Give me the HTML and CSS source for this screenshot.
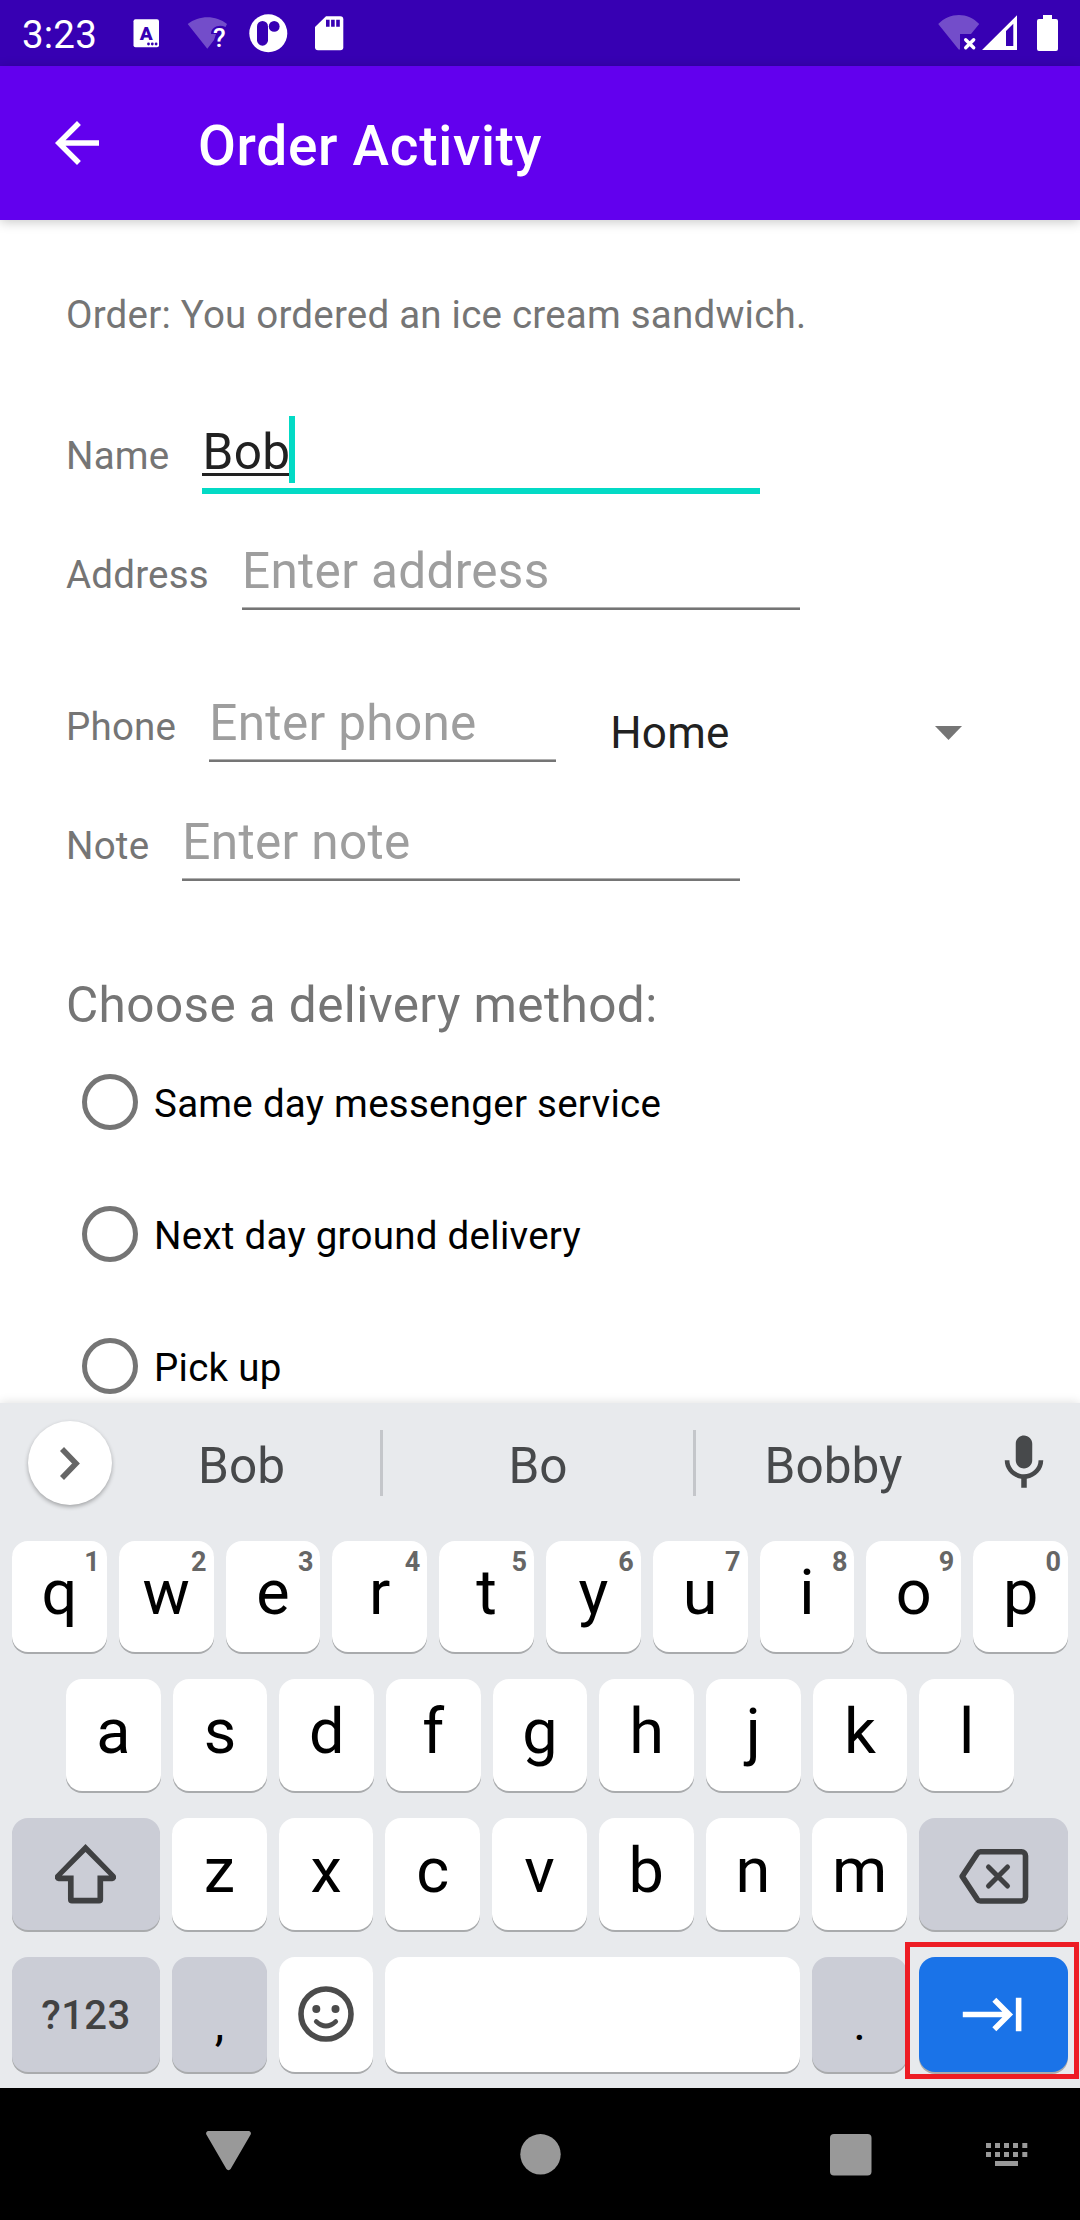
FILE: index.html
```html
<!DOCTYPE html>
<html lang="en">
<head>
<meta charset="utf-8">
<title>Order Activity</title>
<link rel="stylesheet" href="styles.css">
</head>
<body>
<div class="phone">
  <header class="status-bar">
    <span class="clock">3:23</span>
    <svg class="status-icons-left" width="212" height="40" viewBox="132 13 212 40">
      <rect x="133.5" y="19.3" width="25.5" height="28" rx="2" fill="#fff"/>
      <text class="glyph-a" x="146.3" y="40.3" text-anchor="middle">A</text>
      <g fill="#3700b3"><circle cx="148.5" cy="44" r="1.4"/><circle cx="152.3" cy="44" r="1.4"/><circle cx="156.1" cy="44" r="1.4"/></g>
      <path d="M187.7 24C199 15 216 15 227 24L225.500 27C219 24 211 27 211 34H216L214 40L207.300 48.700z" fill="#734dca"/>
      <text class="glyph-q" x="219.300" y="47.300" text-anchor="middle">?</text>
      <circle cx="268.300" cy="33.200" r="19" fill="#fff"/>
      <rect x="257" y="21" width="11" height="24.700" rx="5.500" fill="#3700b3"/>
      <circle cx="274.200" cy="26.400" r="5.400" fill="#3700b3"/>
      <path d="M326 16.300H340.300a3 3 0 0 1 3 3V47.300a3 3 0 0 1-3 3H318a3 3 0 0 1-3-3V27z" fill="#fff"/>
      <path d="M326 19.700h3.600v7H326zM331.100 19.700h3.600v7h-3.600zM336.200 19.700h3.600v7h-3.600z" fill="#3700b3"/>
    </svg>
    <svg class="status-icons-right" width="122" height="38" viewBox="937 14 122 38">
      <path d="M938.200 24C950 12 968 12 979.200 24L971 34H960V49.500H958.700z" fill="#734dca"/>
      <path d="M965.700 39.700l8 8m0-8l-8 8" stroke="#fff" stroke-width="3.400" stroke-linecap="round"/>
      <path fill-rule="evenodd" d="M982 50L1017 15.300V50zM1006 46H1013.300V23.800L1006 31z" fill="#fff"/>
      <path d="M1043 15h9v4h4a2 2 0 0 1 2 2V49a2 2 0 0 1-2 2h-17a2 2 0 0 1-2-2V21a2 2 0 0 1 2-2h4z" fill="#fff"/>
    </svg>
  </header>

  <div class="app-bar">
    <svg width="66" height="66" viewBox="0 0 24 24"><path fill="#fff" d="M20 11H7.830l5.590-5.590L12 4l-8 8 8 8 1.410-1.410L7.830 13H20z"/></svg>
    <h1 class="title">Order Activity</h1>
  </div>

  <main class="form">
    <p class="order">Order: You ordered an ice cream sandwich.</p>
    <div class="row">
      <label class="label">Name</label>
      <div class="field field-active"><span class="composing">Bob</span><span class="cursor"></span></div>
    </div>
    <div class="row row-address">
      <label class="label">Address</label>
      <div class="field">Enter address</div>
    </div>
    <div class="row">
      <label class="label">Phone</label>
      <div class="field field-short">Enter phone</div>
      <div class="spinner"><span>Home</span>
        <svg width="27" height="14" viewBox="0 0 27 14"><path fill="#757575" d="M0 0h27L13.500 14z"/></svg></div>
    </div>
    <div class="row row-note">
      <label class="label">Note</label>
      <div class="field">Enter note</div>
    </div>
    <h2 class="choose">Choose a delivery method:</h2>
    <div class="radio"><span class="ring"></span><span class="radio-text">Same day messenger service</span></div>
    <div class="radio"><span class="ring"></span><span class="radio-text">Next day ground delivery</span></div>
    <div class="radio"><span class="ring"></span><span class="radio-text">Pick up</span></div>
  </main>

  <section class="keyboard">
    <div class="suggestions">
      <div class="expand"><svg width="20" height="33" viewBox="0 0 20 33"><path d="M2 2L16 16.500L2 31" fill="none" stroke="#666" stroke-width="5.600"/></svg></div>
      <span class="word">Bob</span><i class="divider"></i>
      <span class="word word-mid">Bo</span><i class="divider"></i>
      <span class="word word-last">Bobby</span>
      <div class="mic"><svg width="66" height="66" viewBox="0 0 24 24"><path fill="#47494b" d="M12 14c1.660 0 2.990-1.340 2.990-3L15 5c0-1.660-1.340-3-3-3S9 3.340 9 5v6c0 1.660 1.340 3 3 3zm5.300-3c0 3-2.540 5.100-5.300 5.100S6.700 14 6.700 11H5c0 3.410 2.720 6.230 6 6.720V21h2v-3.280c3.280-.480 6-3.300 6-6.720z"/></svg></div>
    </div>
    <div class="keys keys-top">
      <span class="key">q<sup>1</sup></span><span class="key">w<sup>2</sup></span><span class="key">e<sup>3</sup></span><span class="key">r<sup>4</sup></span><span class="key">t<sup>5</sup></span><span class="key">y<sup>6</sup></span><span class="key">u<sup>7</sup></span><span class="key">i<sup>8</sup></span><span class="key">o<sup>9</sup></span><span class="key">p<sup>0</sup></span>
    </div>
    <div class="keys keys-home">
      <span class="key">a</span><span class="key">s</span><span class="key">d</span><span class="key">f</span><span class="key">g</span><span class="key">h</span><span class="key">j</span><span class="key">k</span><span class="key">l</span>
    </div>
    <div class="keys keys-wide">
      <span class="key key-grey key-icon"><svg class="shift" width="61" height="60" viewBox="0 0 61.200 60"><path fill-rule="evenodd" fill="#3f4042" d="M30.600 0L60.300 30.600a3.900 3.900 0 0 1-2.800 6.600H48.300V55.600a4 4 0 0 1-4 4H17a4 4 0 0 1-4-4V37.200H3.600a3.900 3.900 0 0 1-2.800-6.600zM30.600 8L7 31.600H18.700V53.800H42.600V31.600H54.200z"/></svg></span>
      <span class="key">z</span><span class="key">x</span><span class="key">c</span><span class="key">v</span><span class="key">b</span><span class="key">n</span><span class="key">m</span>
      <span class="key key-grey key-icon"><svg class="backspace" width="70" height="55" viewBox="0 0 70 55"><g fill="none" stroke="#3f4042" stroke-width="5.600" stroke-linejoin="round"><path d="M21.500 2.800H62.500a4 4 0 0 1 4 4V48a4 4 0 0 1-4 4H21.500a4 4 0 0 1-3.200-1.700L3.200 27.400L18.300 4.500a4 4 0 0 1 3.200-1.700z"/><path d="M29.500 18l19 19m0-19l-19 19" stroke-width="5" stroke-linecap="round"/></g></svg></span>
    </div>
    <div class="keys keys-wide keys-bottom">
      <span class="key key-grey key-symbols">?123</span>
      <span class="key key-grey key-punct">,</span>
      <span class="key key-icon"><svg class="emoji" width="56" height="56" viewBox="0 0 56 56"><circle cx="28" cy="28" r="25" fill="none" stroke="#4b4b4b" stroke-width="5.600"/><circle cx="18.300" cy="23" r="4" fill="#4b4b4b"/><circle cx="37.500" cy="23" r="4" fill="#4b4b4b"/><path d="M18.200 35.500Q28 44.500 37.800 35.500" fill="none" stroke="#4b4b4b" stroke-width="4.600" stroke-linecap="round"/></svg></span>
      <span class="key key-space"></span>
      <span class="key key-grey key-punct">.</span>
      <span class="key key-next key-icon"><svg width="67" height="67" viewBox="0 0 24 24"><path fill="#fff" d="M11.590 7.410L15.170 11H1v2h14.170l-3.590 3.590L13 18l6-6-6-6zM20 6v12h2V6z"/></svg><i class="highlight"></i></span>
    </div>
  </section>

  <nav class="nav-bar">
    <svg class="nav-back" width="45" height="40" viewBox="0 0 45 40"><path fill="#999" d="M2.500 0H42.500a2.400 2.400 0 0 1 2 3.700L24.600 38a2.500 2.500 0 0 1-4.200 0L.5 3.700A2.400 2.400 0 0 1 2.500 0z"/></svg>
    <svg class="nav-home" width="41" height="41" viewBox="0 0 41 41"><circle cx="20.500" cy="20.300" r="20.200" fill="#999"/></svg>
    <svg class="nav-recent" width="42" height="42" viewBox="0 0 42 42"><rect width="41.500" height="41.500" rx="4" fill="#999"/></svg>
    <svg class="nav-ime" width="42" height="24" viewBox="0 0 42 24"><path fill="#999" d="M0 0h5v5H0zM9 0h5v5H9zM18 0h5v5h-5zM27 0h5v5h-5zM36.300 0h5v5h-5zM0 9h5v5H0zM9 9h5v5H9zM18 9h5v5h-5zM27 9h5v5h-5zM36.300 9h5v5h-5zM9 18h23v5H9z"/></svg>
  </nav>
</div>
</body>
</html>
```
FILE: styles.css
```css
* { box-sizing: border-box; }

body {
  margin: 0;
  background: #fff;
  font-family: Roboto, "Liberation Sans", sans-serif;
}

svg { display: block; flex: none; }

.phone {
  width: 1080px;
  height: 2220px;
  display: flex;
  flex-direction: column;
  overflow: hidden;
}

/* Status bar */
.status-bar {
  height: 66px;
  flex: none;
  display: flex;
  align-items: center;
  padding: 0 21px 0 22px;
  background: #3700b3;
}
.clock {
  width: 110px;
  padding-top: 4px;
  color: #fff;
  font-size: 38.5px;
  letter-spacing: .2px;
  line-height: 62px;
}
.status-icons-right { margin-left: auto; }
.glyph-a { font-size: 19px; font-weight: 900; fill: #3700b3; }
.glyph-q { font-size: 26px; font-weight: 500; fill: #fff; }

/* App bar */
.app-bar {
  height: 154px;
  flex: none;
  display: flex;
  align-items: center;
  gap: 88px;
  padding-left: 44px;
  background: #6200ee;
  box-shadow: 0 2px 11px rgba(0, 0, 0, .22);
  position: relative;
}
.title {
  margin: 6px 0 0;
  color: #fff;
  font-size: 55px;
  font-weight: 500;
  letter-spacing: .7px;
  line-height: 64px;
}

/* Form */
.form {
  height: 1183px;
  flex: none;
  padding: 72px 66px 0;
  overflow: hidden;
  color: #757575;
  font-size: 38.5px;
  letter-spacing: .22px;
}
.order { margin: 0 0 86px; line-height: 45px; }
.row {
  display: flex;
  align-items: baseline;
  height: 119px;
}
.row-address { height: 152px; }
.row-note { height: 163px; }
.label { margin-right: 33px; line-height: 45px; }
.field {
  width: 558px;
  padding-bottom: 8px;
  border-bottom: 2px solid #757575;
  box-shadow: inset 0 -1px #b0b0b0;
  color: #9e9e9e;
  font-size: 49.5px;
  letter-spacing: .33px;
  line-height: 58px;
  white-space: nowrap;
}
.field-short { width: 347px; }
.field-active {
  display: flex;
  align-items: flex-start;
  height: 71px;
  padding-bottom: 7px;
  border-bottom: 6px solid #03dac5;
  box-shadow: none;
  color: #212121;
}
.composing {
  height: 53px;
  border-bottom: 3px solid #212121;
}
.cursor {
  width: 6px;
  height: 67px;
  margin: -7px 0 0 -1px;
  background: #03dac5;
}
.spinner {
  display: flex;
  justify-content: space-between;
  align-items: center;
  align-self: flex-start;
  width: 352px;
  margin: 13px 0 0 54px;
  color: #212121;
  font-size: 44px;
  line-height: 52px;
}
.choose {
  margin: 0 0 2px;
  font-size: 49.5px;
  font-weight: 400;
  letter-spacing: .4px;
  line-height: 58px;
}
.radio {
  display: flex;
  align-items: center;
  gap: 16px;
  height: 132px;
  padding-left: 16px;
  color: #000;
}
.ring {
  width: 56px;
  height: 56px;
  border: 5.5px solid #757575;
  border-radius: 50%;
}
.radio-text { padding-top: 3px; letter-spacing: .27px; line-height: 45px; }

/* Keyboard */
.keyboard {
  height: 685px;
  flex: none;
  position: relative;
  background: #e8eaed;
  box-shadow: 0 0 10px rgba(0, 0, 0, .14);
}
.suggestions {
  height: 138px;
  padding-top: 27px;
  display: flex;
}
.expand {
  width: 84px;
  height: 84px;
  margin: -9px -9px 0 28px;
  display: flex;
  align-items: center;
  justify-content: center;
  background: #fff;
  border-radius: 50%;
  box-shadow: 0 2px 4px rgba(0, 0, 0, .3);
}
.word {
  width: 277px;
  padding-top: 6px;
  text-align: center;
  color: #47494b;
  font-size: 49.5px;
  line-height: 60px;
}
.word-mid { width: 310px; }
.word-last { width: 275px; }
.divider { width: 3px; height: 66px; background: #c4c6ca; }
.mic { margin-left: 20px; }

.keys {
  display: grid;
  gap: 12px;
  height: 112px;
  margin: 0 12px 27px;
}
.keys-top { grid-template-columns: repeat(10, 1fr); height: 111px; }
.keys-home { grid-template-columns: repeat(9, 1fr); margin: 0 66px 27px; }
.keys-wide { grid-template-columns: 148px repeat(7, 1fr) 149px; }
.keys-bottom { height: 115px; }
.key {
  position: relative;
  display: flex;
  align-items: center;
  justify-content: center;
  padding-bottom: 7px;
  background: #fff;
  border-radius: 16px;
  box-shadow: 0 2px #a9abad;
  color: #000;
  font-size: 63px;
  line-height: 74px;
}
.key sup {
  position: absolute;
  top: 5px;
  right: 7px;
  color: #666;
  font-size: 27px;
  font-weight: 700;
  line-height: 32px;
}
.key-grey { background: #cbcdd6; }
.key-icon { padding: 0; }
.shift { margin-left: -2px; }
.backspace { margin: 5px 0 0; }
.emoji { margin: -2px 1px 0 0; }
.key-symbols {
  padding: 3px 0 0;
  color: #424242;
  font-size: 40px;
  font-weight: 500;
  letter-spacing: .5px;
}
.key-punct { padding: 18px 0 0; font-size: 48px; }
.key-space { grid-column: span 4; }
.key-next { background: #1a73e8; }
.highlight {
  position: absolute;
  inset: -15px -11px -7px -14px;
  border: 5px solid #ed1c24;
}

/* Navigation bar */
.nav-bar {
  height: 132px;
  flex: none;
  position: relative;
  display: flex;
  align-items: flex-start;
  padding: 43px 0 0 206px;
  background: #000;
}
.nav-home { margin: 3px 0 0 269px; }
.nav-recent { margin: 3px 0 0 269px; }
.nav-ime { margin: 12px 0 0 114px; }
```
